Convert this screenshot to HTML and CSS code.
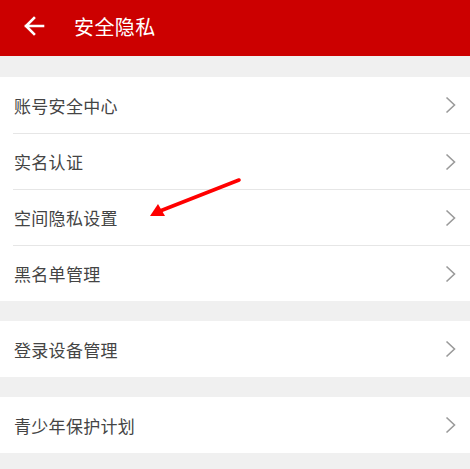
FILE: index.html
```html
<!DOCTYPE html>
<html lang="zh">
<head>
<meta charset="utf-8">
<link rel="stylesheet" href="styles.css">
</head>
<body>
<div class="page">
  <header class="topbar">
    <svg class="back" width="22" height="20" viewBox="0 0 22 20">
      <path d="M20 10H3M11 2L3 10l8 8" fill="none" stroke="#fff" stroke-width="2.6" stroke-linecap="square"/>
    </svg>
    <h1 class="title">安全隐私</h1>
  </header>

  <div class="group">
    <div class="row"><span>账号安全中心</span><svg class="chev" width="11" height="18" viewBox="0 0 11 18"><path d="M1.5 1.5L9.5 9l-8 7.5" fill="none" stroke="#9a9a9a" stroke-width="1.6"/></svg></div>
    <div class="row"><span>实名认证</span><svg class="chev" width="11" height="18" viewBox="0 0 11 18"><path d="M1.5 1.5L9.5 9l-8 7.5" fill="none" stroke="#9a9a9a" stroke-width="1.6"/></svg></div>
    <div class="row"><span>空间隐私设置</span><svg class="chev" width="11" height="18" viewBox="0 0 11 18"><path d="M1.5 1.5L9.5 9l-8 7.5" fill="none" stroke="#9a9a9a" stroke-width="1.6"/></svg></div>
    <div class="row"><span>黑名单管理</span><svg class="chev" width="11" height="18" viewBox="0 0 11 18"><path d="M1.5 1.5L9.5 9l-8 7.5" fill="none" stroke="#9a9a9a" stroke-width="1.6"/></svg></div>
  </div>

  <div class="group">
    <div class="row"><span>登录设备管理</span><svg class="chev" width="11" height="18" viewBox="0 0 11 18"><path d="M1.5 1.5L9.5 9l-8 7.5" fill="none" stroke="#9a9a9a" stroke-width="1.6"/></svg></div>
  </div>

  <div class="group">
    <div class="row"><span>青少年保护计划</span><svg class="chev" width="11" height="18" viewBox="0 0 11 18"><path d="M1.5 1.5L9.5 9l-8 7.5" fill="none" stroke="#9a9a9a" stroke-width="1.6"/></svg></div>
  </div>

  <svg class="annot" width="470" height="469" viewBox="0 0 470 469">
    <path d="M239 180L160 211" fill="none" stroke="#ff0000" stroke-width="3.6" stroke-linecap="round"/>
    <path d="M150 216L158 204L165 216Z" fill="#ff0000"/>
  </svg>
</div>
</body>
</html>
```

FILE: styles.css
```css
* { box-sizing: border-box; }
html, body {
  margin: 0;
  padding: 0;
  background: #f0f0f0;
  font-family: "Noto Sans CJK SC", "Noto Sans", sans-serif;
}
.page {
  position: relative;
  width: 470px;
  height: 469px;
  overflow: hidden;
  display: flex;
  flex-direction: column;
  gap: 20px;
}
.topbar {
  height: 56px;
  background: #cc0000;
  display: flex;
  align-items: center;
  padding-left: 23px;
  margin-bottom: 1px;
}
.back { display: block; margin-top: -4px; }
.title {
  margin: -4px 0 0 29px;
  font-size: 20px;
  font-weight: normal;
  color: #fff;
  letter-spacing: 0.4px;
}
.group {
  background: #fff;
  padding-left: 13px;
}
.row {
  height: 56px;
  display: flex;
  align-items: center;
  justify-content: space-between;
  padding: 0 14px 0 1px;
  border-top: 1px solid #e6e6e6;
  font-size: 17px;
  font-weight: normal;
  letter-spacing: 0.3px;
  color: #444;
}
.group .row:first-child { border-top: none; }
.chev { display: block; }
.annot {
  position: absolute;
  left: 0;
  top: 0;
  pointer-events: none;
}
```
